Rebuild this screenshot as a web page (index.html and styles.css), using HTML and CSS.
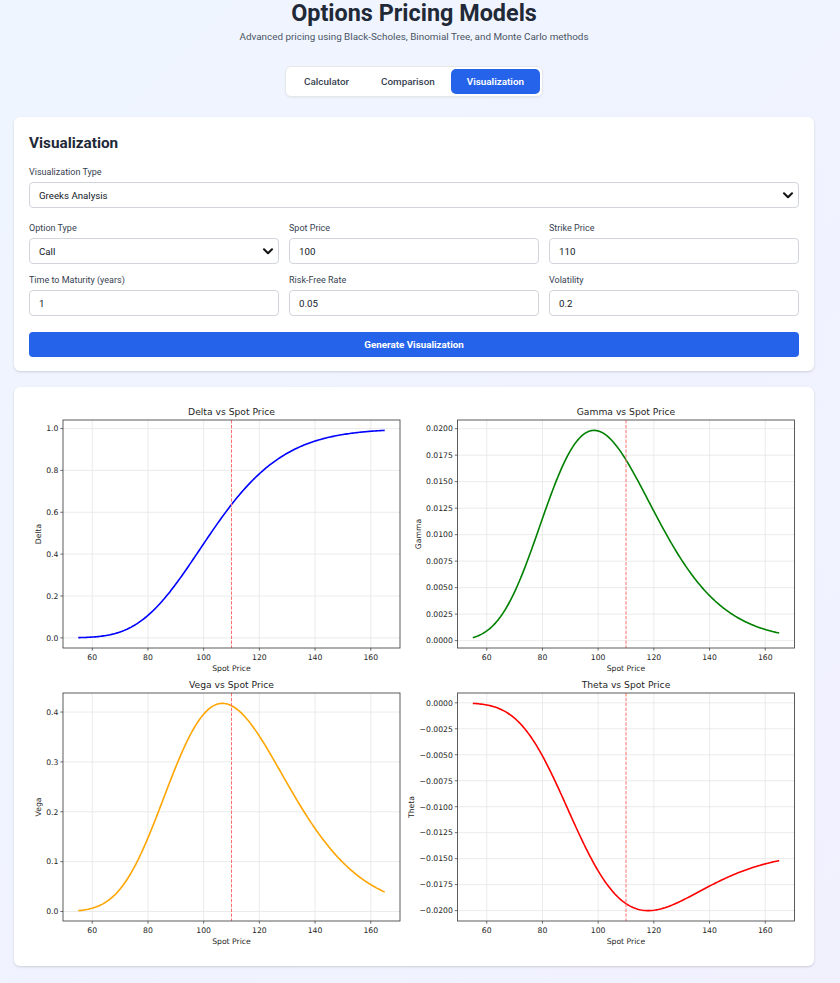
FILE: index.html
```html
<!DOCTYPE html>
<html lang="en">
<head>
<meta charset="utf-8">
<title>Options Pricing Models</title>
<link rel="stylesheet" href="styles.css">
</head>
<body>
<div class="app">
  <header class="header">
    <h1 class="title">Options Pricing Models</h1>
    <p class="subtitle">Advanced pricing using Black-Scholes, Binomial Tree, and Monte Carlo methods</p>
  </header>

  <nav class="tabs-wrap">
    <div class="tabs">
      <button class="tab">Calculator</button>
      <button class="tab">Comparison</button>
      <button class="tab tab-active">Visualization</button>
    </div>
  </nav>

  <section class="card form-card">
    <h2 class="card-title">Visualization</h2>
    <div class="group">
      <label class="label">Visualization Type</label>
      <div class="select-wrap">
        <select class="control select"><option>Greeks Analysis</option></select>
        <svg class="chev" width="10" height="7" viewBox="0 0 10 7"><path d="M1 1.2 5 5.2 9 1.2"/></svg>
      </div>
    </div>
    <div class="grid">
      <div class="field">
        <label class="label">Option Type</label>
        <div class="select-wrap">
          <select class="control select"><option>Call</option><option>Put</option></select>
          <svg class="chev" width="10" height="7" viewBox="0 0 10 7"><path d="M1 1.2 5 5.2 9 1.2"/></svg>
        </div>
      </div>
      <div class="field">
        <label class="label">Spot Price</label>
        <input class="control" type="text" value="100">
      </div>
      <div class="field">
        <label class="label">Strike Price</label>
        <input class="control" type="text" value="110">
      </div>
      <div class="field">
        <label class="label">Time to Maturity (years)</label>
        <input class="control" type="text" value="1">
      </div>
      <div class="field">
        <label class="label">Risk-Free Rate</label>
        <input class="control" type="text" value="0.05">
      </div>
      <div class="field">
        <label class="label">Volatility</label>
        <input class="control" type="text" value="0.2">
      </div>
    </div>
    <button class="btn">Generate Visualization</button>
  </section>

  <section class="card chart-card">
    <svg class="figure" width="770" height="549" viewBox="0 0 770 549">
      <!-- Delta -->
      <g transform="translate(34 18)">
        <path class="gridln" d="M29.24 0V228M84.95 0V228M140.65 0V228M196.35 0V228M252.05 0V228M307.76 0V228M0 8.54H337M0 50.40H337M0 92.25H337M0 134.11H337M0 175.97H337M0 217.83H337"/>
        <path class="curve c-delta" id="curve-delta"/>
        <line class="strike" x1="168.5" y1="0" x2="168.5" y2="228"/>
        <rect class="spine" x="0" y="0" width="337" height="228"/>
        <path class="tick" d="M29.24 228v2.7M84.95 228v2.7M140.65 228v2.7M196.35 228v2.7M252.05 228v2.7M307.76 228v2.7M0 8.54h-2.7M0 50.40h-2.7M0 92.25h-2.7M0 134.11h-2.7M0 175.97h-2.7M0 217.83h-2.7"/>
        <g class="ytl">
          <text x="-4.6" y="11.34">1.0</text>
          <text x="-4.6" y="53.2">0.8</text>
          <text x="-4.6" y="95.05">0.6</text>
          <text x="-4.6" y="136.91">0.4</text>
          <text x="-4.6" y="178.77">0.2</text>
          <text x="-4.6" y="220.63">0.0</text>
        </g>
        <g class="xtl">
          <text x="29.24" y="240">60</text>
          <text x="84.95" y="240">80</text>
          <text x="140.65" y="240">100</text>
          <text x="196.35" y="240">120</text>
          <text x="252.05" y="240">140</text>
          <text x="307.76" y="240">160</text>
        </g>
        <text class="axlabel" x="168.5" y="251">Spot Price</text>
        <text class="axlabel" transform="translate(-22 114) rotate(-90)">Delta</text>
        <text class="axtitle" x="168.5" y="-4.6">Delta vs Spot Price</text>
      </g>

      <!-- Gamma -->
      <g transform="translate(428.5 18)">
        <path class="gridln" d="M29.24 0V228M84.95 0V228M140.65 0V228M196.35 0V228M252.05 0V228M307.76 0V228M0 8.68H337M0 35.17H337M0 61.67H337M0 88.16H337M0 114.66H337M0 141.15H337M0 167.65H337M0 194.14H337M0 220.63H337"/>
        <path class="curve c-gamma" id="curve-gamma"/>
        <line class="strike" x1="168.5" y1="0" x2="168.5" y2="228"/>
        <rect class="spine" x="0" y="0" width="337" height="228"/>
        <path class="tick" d="M29.24 228v2.7M84.95 228v2.7M140.65 228v2.7M196.35 228v2.7M252.05 228v2.7M307.76 228v2.7M0 8.68h-2.7M0 35.17h-2.7M0 61.67h-2.7M0 88.16h-2.7M0 114.66h-2.7M0 141.15h-2.7M0 167.65h-2.7M0 194.14h-2.7M0 220.63h-2.7"/>
        <g class="ytl">
          <text x="-4.6" y="11.48">0.0200</text>
          <text x="-4.6" y="37.97">0.0175</text>
          <text x="-4.6" y="64.47">0.0150</text>
          <text x="-4.6" y="90.96">0.0125</text>
          <text x="-4.6" y="117.46">0.0100</text>
          <text x="-4.6" y="143.95">0.0075</text>
          <text x="-4.6" y="170.45">0.0050</text>
          <text x="-4.6" y="196.94">0.0025</text>
          <text x="-4.6" y="223.43">0.0000</text>
        </g>
        <g class="xtl">
          <text x="29.24" y="240">60</text>
          <text x="84.95" y="240">80</text>
          <text x="140.65" y="240">100</text>
          <text x="196.35" y="240">120</text>
          <text x="252.05" y="240">140</text>
          <text x="307.76" y="240">160</text>
        </g>
        <text class="axlabel" x="168.5" y="251">Spot Price</text>
        <text class="axlabel" transform="translate(-36.4 114) rotate(-90)">Gamma</text>
        <text class="axtitle" x="168.5" y="-4.6">Gamma vs Spot Price</text>
      </g>

      <!-- Vega -->
      <g transform="translate(34 291)">
        <path class="gridln" d="M29.24 0V228M84.95 0V228M140.65 0V228M196.35 0V228M252.05 0V228M307.76 0V228M0 19.06H337M0 68.92H337M0 118.77H337M0 168.63H337M0 218.49H337"/>
        <path class="curve c-vega" id="curve-vega"/>
        <line class="strike" x1="168.5" y1="0" x2="168.5" y2="228"/>
        <rect class="spine" x="0" y="0" width="337" height="228"/>
        <path class="tick" d="M29.24 228v2.7M84.95 228v2.7M140.65 228v2.7M196.35 228v2.7M252.05 228v2.7M307.76 228v2.7M0 19.06h-2.7M0 68.92h-2.7M0 118.77h-2.7M0 168.63h-2.7M0 218.49h-2.7"/>
        <g class="ytl">
          <text x="-4.6" y="21.86">0.4</text>
          <text x="-4.6" y="71.72">0.3</text>
          <text x="-4.6" y="121.57">0.2</text>
          <text x="-4.6" y="171.43">0.1</text>
          <text x="-4.6" y="221.29">0.0</text>
        </g>
        <g class="xtl">
          <text x="29.24" y="240">60</text>
          <text x="84.95" y="240">80</text>
          <text x="140.65" y="240">100</text>
          <text x="196.35" y="240">120</text>
          <text x="252.05" y="240">140</text>
          <text x="307.76" y="240">160</text>
        </g>
        <text class="axlabel" x="168.5" y="251">Spot Price</text>
        <text class="axlabel" transform="translate(-22 114) rotate(-90)">Vega</text>
        <text class="axtitle" x="168.5" y="-4.6">Vega vs Spot Price</text>
      </g>

      <!-- Theta -->
      <g transform="translate(428.5 291)">
        <path class="gridln" d="M29.24 0V228M84.95 0V228M140.65 0V228M196.35 0V228M252.05 0V228M307.76 0V228M0 9.81H337M0 35.78H337M0 61.76H337M0 87.73H337M0 113.71H337M0 139.68H337M0 165.66H337M0 191.63H337M0 217.61H337"/>
        <path class="curve c-theta" id="curve-theta"/>
        <line class="strike" x1="168.5" y1="0" x2="168.5" y2="228"/>
        <rect class="spine" x="0" y="0" width="337" height="228"/>
        <path class="tick" d="M29.24 228v2.7M84.95 228v2.7M140.65 228v2.7M196.35 228v2.7M252.05 228v2.7M307.76 228v2.7M0 9.81h-2.7M0 35.78h-2.7M0 61.76h-2.7M0 87.73h-2.7M0 113.71h-2.7M0 139.68h-2.7M0 165.66h-2.7M0 191.63h-2.7M0 217.61h-2.7"/>
        <g class="ytl">
          <text x="-4.6" y="12.61">0.0000</text>
          <text x="-4.6" y="38.58">−0.0025</text>
          <text x="-4.6" y="64.56">−0.0050</text>
          <text x="-4.6" y="90.53">−0.0075</text>
          <text x="-4.6" y="116.51">−0.0100</text>
          <text x="-4.6" y="142.48">−0.0125</text>
          <text x="-4.6" y="168.46">−0.0150</text>
          <text x="-4.6" y="194.43">−0.0175</text>
          <text x="-4.6" y="220.41">−0.0200</text>
        </g>
        <g class="xtl">
          <text x="29.24" y="240">60</text>
          <text x="84.95" y="240">80</text>
          <text x="140.65" y="240">100</text>
          <text x="196.35" y="240">120</text>
          <text x="252.05" y="240">140</text>
          <text x="307.76" y="240">160</text>
        </g>
        <text class="axlabel" x="168.5" y="251">Spot Price</text>
        <text class="axlabel" transform="translate(-43.7 114) rotate(-90)">Theta</text>
        <text class="axtitle" x="168.5" y="-4.6">Theta vs Spot Price</text>
      </g>
    </svg>
  </section>
</div>
<script src="script.js"></script>
</body>
</html>
```

FILE: styles.css
```css
* { box-sizing: border-box; }

html {
  min-height: 100%;
  background: linear-gradient(135deg, #eff5ff 0%, #f0f3ff 60%, #f1f1fe 100%);
}

body {
  margin: 0;
  font-family: Roboto, "Liberation Sans", Arial, sans-serif;
  color: #1f2937;
}

.app {
  width: 800px;
  margin: 0 0 0 14px;
  padding-bottom: 8px;
}

.header { text-align: center; }

.title {
  margin: 0;
  font-size: 23.4px;
  line-height: 26px;
  font-weight: 700;
  color: #1f2937;
}

.subtitle {
  margin: 5px 0 0;
  font-size: 9.9px;
  line-height: 12px;
  color: #4b5563;
}

.tabs-wrap {
  display: flex;
  justify-content: center;
  margin-top: 23px;
}

.tabs {
  display: flex;
  background: #ffffff;
  border: 1px solid #e5e7eb;
  border-radius: 6px;
  padding: 2px;
  box-shadow: 0 1px 2px rgba(0, 0, 0, 0.05);
}

.tab {
  height: 25px;
  padding: 0 16px;
  border: 0;
  border-radius: 5px;
  background: transparent;
  font-family: inherit;
  font-size: 9.9px;
  font-weight: 500;
  color: #374151;
  cursor: pointer;
}

.tab-active {
  background: #2563eb;
  color: #ffffff;
  font-weight: 600;
}

.card {
  background: #ffffff;
  border-radius: 6px;
  box-shadow: 0 1px 3px rgba(0, 0, 0, 0.1), 0 1px 2px rgba(0, 0, 0, 0.06);
}

.form-card {
  margin-top: 20px;
  padding: 17px 15px 14px;
}

.card-title {
  margin: 0 0 15px;
  font-size: 15.3px;
  line-height: 18px;
  font-weight: 700;
  color: #1f2937;
}

.group { margin-bottom: 15px; }

.label {
  display: block;
  margin-bottom: 4px;
  font-size: 9px;
  line-height: 11px;
  font-weight: 400;
  color: #374151;
}

.select-wrap { position: relative; }

.control {
  display: block;
  width: 100%;
  height: 26px;
  padding: 0 9px;
  border: 1px solid #d1d5db;
  border-radius: 4px;
  background: #ffffff;
  font-family: inherit;
  font-size: 9.7px;
  color: #111827;
  outline: none;
}

.select {
  -webkit-appearance: none;
  appearance: none;
}

.chev {
  position: absolute;
  right: 6px;
  top: 10px;
  pointer-events: none;
}

.chev path {
  fill: none;
  stroke: #111111;
  stroke-width: 2;
  stroke-linecap: round;
  stroke-linejoin: round;
}

.grid {
  display: grid;
  grid-template-columns: repeat(3, 1fr);
  column-gap: 10px;
  row-gap: 11px;
}

.btn {
  display: block;
  width: 100%;
  height: 25px;
  margin-top: 16px;
  border: 0;
  border-radius: 4px;
  background: #2563eb;
  color: #ffffff;
  font-family: inherit;
  font-size: 9.8px;
  font-weight: 700;
  cursor: pointer;
}

.chart-card {
  margin-top: 16px;
  padding: 15px;
}

.figure { display: block; }

.gridln {
  fill: none;
  stroke: #e6e6e6;
  stroke-width: 0.8;
}

.curve {
  fill: none;
  stroke-width: 1.6;
  stroke-linejoin: round;
  stroke-linecap: butt;
}

.c-delta { stroke: #0000ff; }
.c-gamma { stroke: #008000; }
.c-vega { stroke: #ffa500; }
.c-theta { stroke: #ff0000; }

.strike {
  stroke: #ff6f6f;
  stroke-width: 1;
  stroke-dasharray: 3.4 1.5;
}

.spine {
  fill: none;
  stroke: #4a4a4a;
  stroke-width: 0.9;
}

.tick {
  fill: none;
  stroke: #333333;
  stroke-width: 0.7;
}

.ytl text,
.xtl text,
.axlabel,
.axtitle {
  font-family: "DejaVu Sans", sans-serif;
  fill: #262626;
}

.ytl text { font-size: 7.7px; text-anchor: end; }
.xtl text { font-size: 7.7px; text-anchor: middle; }
.axlabel { font-size: 7.7px; text-anchor: middle; }
.axtitle { font-size: 9.2px; text-anchor: middle; }
```

FILE: script.js
```js
(function () {
  var K = 110, r = 0.05, sig = 0.2, T = 1;

  function pdf(x) { return Math.exp(-x * x / 2) / Math.sqrt(2 * Math.PI); }

  function cdf(x) {
    var z = Math.abs(x) / Math.SQRT2;
    var t = 1 / (1 + 0.3275911 * z);
    var y = 1 - (((((1.061405429 * t - 1.453152027) * t) + 1.421413741) * t - 0.284496736) * t + 0.254829592) * t * Math.exp(-z * z);
    return x >= 0 ? 0.5 * (1 + y) : 0.5 * (1 - y);
  }

  function d1(S) { return (Math.log(S / K) + (r + sig * sig / 2) * T) / (sig * Math.sqrt(T)); }

  var greeks = {
    delta: function (S) { return cdf(d1(S)); },
    gamma: function (S) { return pdf(d1(S)) / (S * sig * Math.sqrt(T)); },
    vega: function (S) { return S * pdf(d1(S)) * Math.sqrt(T) / 100; },
    theta: function (S) {
      var a = d1(S), b = a - sig * Math.sqrt(T);
      return (-S * pdf(a) * sig / (2 * Math.sqrt(T)) - r * K * Math.exp(-r * T) * cdf(b)) / 365;
    }
  };

  var ranges = {
    delta: [-0.0486, 1.040798],
    gamma: [-0.000695, 0.020819],
    vega: [-0.019074, 0.438226],
    theta: [-0.0210005, 0.000944]
  };

  var W = 337, H = 228, X0 = 49.5, X1 = 170.5;

  Object.keys(greeks).forEach(function (k) {
    var el = document.getElementById('curve-' + k);
    if (!el) return;
    var f = greeks[k], lo = ranges[k][0], hi = ranges[k][1], d = '';
    for (var i = 0; i <= 220; i++) {
      var S = 55 + 110 * i / 220;
      var x = (S - X0) / (X1 - X0) * W;
      var y = (hi - f(S)) / (hi - lo) * H;
      d += (i ? 'L' : 'M') + x.toFixed(2) + ' ' + y.toFixed(2);
    }
    el.setAttribute('d', d);
  });
})();
```
